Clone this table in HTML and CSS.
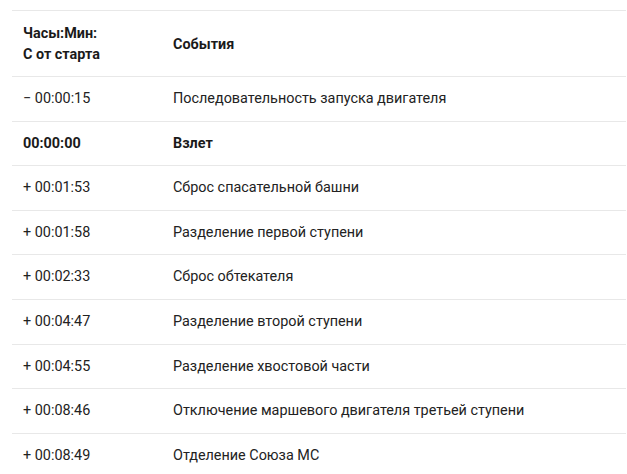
FILE: index.html
```html
<!DOCTYPE html>
<html lang="ru">
<head>
<meta charset="utf-8">
<link rel="stylesheet" href="styles.css">
</head>
<body>
<div class="wrap">
<table class="timeline">
  <thead>
    <tr><th class="c1">Часы:Мин:<br>С от старта</th><th>События</th></tr>
  </thead>
  <tbody>
    <tr><td class="c1">− 00:00:15</td><td>Последовательность запуска двигателя</td></tr>
    <tr class="strong"><td class="c1">00:00:00</td><td>Взлет</td></tr>
    <tr><td class="c1">+ 00:01:53</td><td>Сброс спасательной башни</td></tr>
    <tr><td class="c1">+ 00:01:58</td><td>Разделение первой ступени</td></tr>
    <tr><td class="c1">+ 00:02:33</td><td>Сброс обтекателя</td></tr>
    <tr><td class="c1">+ 00:04:47</td><td>Разделение второй ступени</td></tr>
    <tr><td class="c1">+ 00:04:55</td><td>Разделение хвостовой части</td></tr>
    <tr><td class="c1">+ 00:08:46</td><td>Отключение маршевого двигателя третьей ступени</td></tr>
    <tr><td class="c1">+ 00:08:49</td><td>Отделение Союза МС</td></tr>
  </tbody>
</table>
</div>
</body>
</html>
```
FILE: styles.css
```css
html, body {
  margin: 0;
  padding: 0;
  background: #fff;
}
.wrap {
  padding: 10px 1px 0 12px;
}
.timeline {
  width: 100%;
  border-collapse: collapse;
  font-family: Roboto, "Liberation Sans", sans-serif;
  font-size: 14.4px;
  line-height: 19.6px;
  color: #222;
}
.timeline th,
.timeline td {
  text-align: left;
  vertical-align: middle;
  padding: 12px 11px;
  border-top: 1px solid #e8e8e8;
}
.timeline th {
  font-weight: 700;
  color: #1a1a1a;
  line-height: 21px;
  padding-bottom: 11px;
}
.timeline .c1 {
  width: 128px;
}
.timeline .strong td {
  font-weight: 700;
  color: #1a1a1a;
}
```
